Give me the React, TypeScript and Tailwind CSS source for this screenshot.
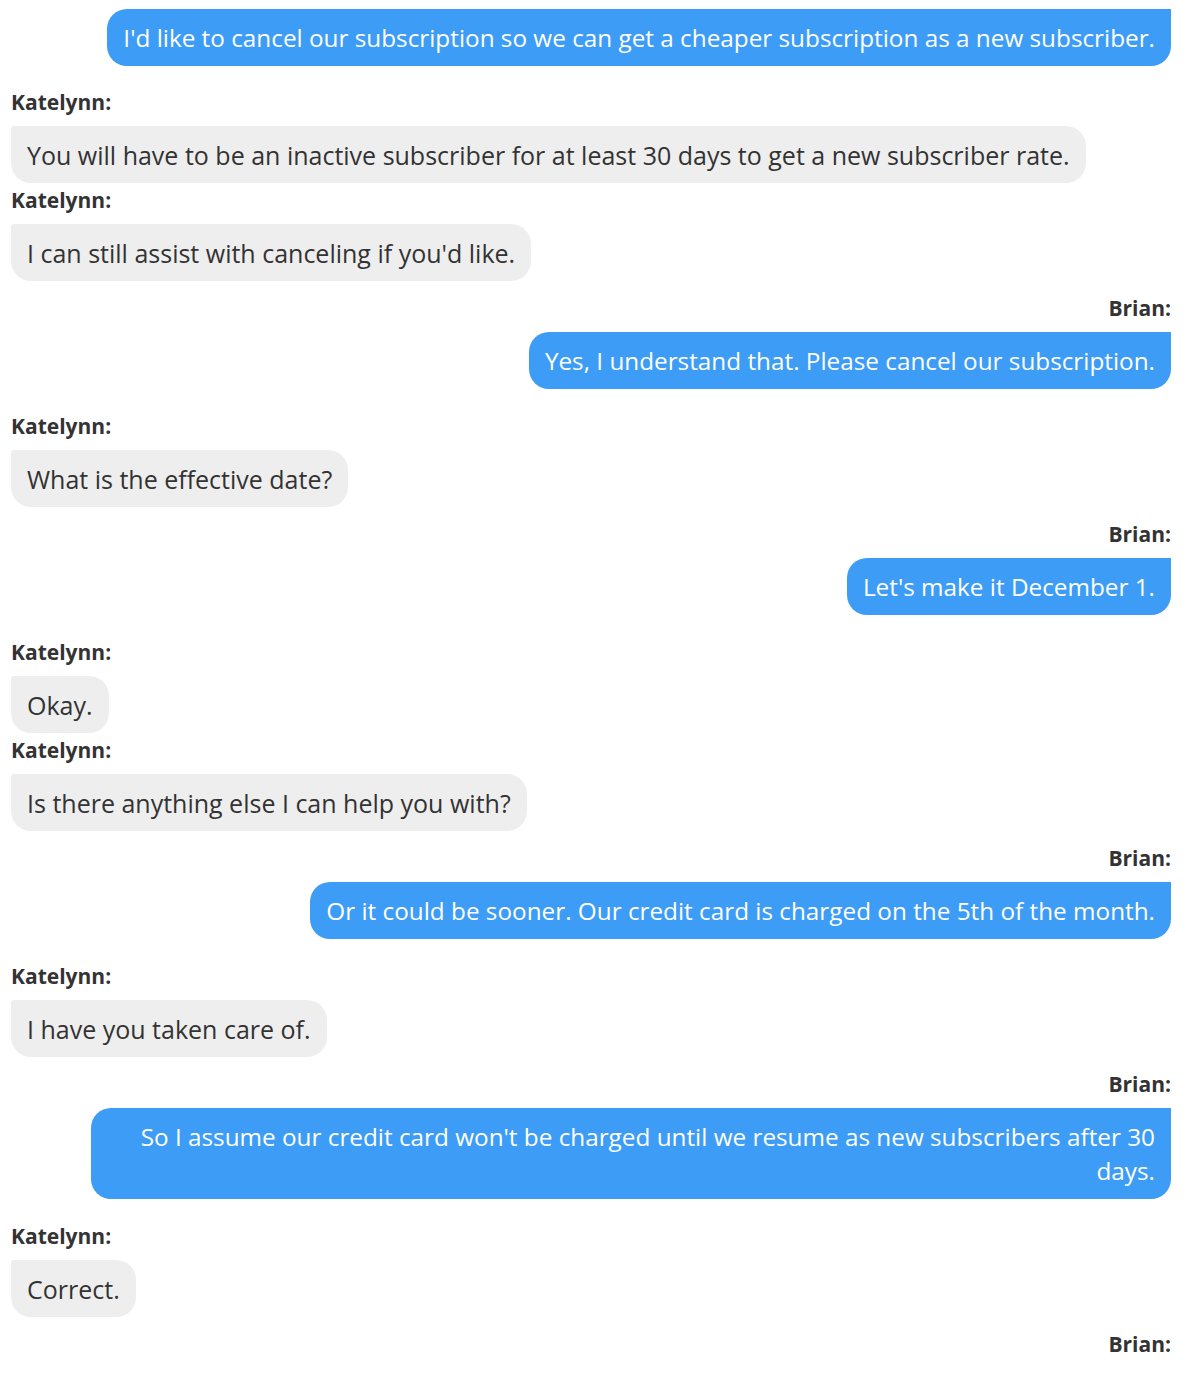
import React from 'react'

type Message = {
  from: 'Katelynn' | 'Brian'
  text: string
  hideName?: boolean
}

// transcript, oldest first (the top one is scrolled so its name is cut off)
const messages: Message[] = [
  { from: 'Brian', text: "I'd like to cancel our subscription so we can get a cheaper subscription as a new subscriber.", hideName: true },
  { from: 'Katelynn', text: 'You will have to be an inactive subscriber for at least 30 days to get a new subscriber rate.' },
  { from: 'Katelynn', text: "I can still assist with canceling if you'd like." },
  { from: 'Brian', text: 'Yes, I understand that. Please cancel our subscription.' },
  { from: 'Katelynn', text: 'What is the effective date?' },
  { from: 'Brian', text: "Let's make it December 1." },
  { from: 'Katelynn', text: 'Okay.' },
  { from: 'Katelynn', text: 'Is there anything else I can help you with?' },
  { from: 'Brian', text: 'Or it could be sooner. Our credit card is charged on the 5th of the month.' },
  { from: 'Katelynn', text: 'I have you taken care of.' },
  { from: 'Brian', text: "So I assume our credit card won't be charged until we resume as new subscribers after 30 days." },
  { from: 'Katelynn', text: 'Correct.' },
]

const ChatBubble = ({ message }: { message: Message }) => {
  const isMe = message.from === 'Brian'

  if (isMe) {
    return (
      <div className={message.hideName ? 'flex flex-col items-end mb-[19px]' : 'flex flex-col items-end mt-[13px] mb-[20px]'}>
        {!message.hideName && (
          <div className='text-[21px] leading-[28px] font-bold text-[#333333] mb-[10px]'>
            {message.from}:
          </div>
        )}
        <div className='max-w-[1080px] bg-[#3d9cf6] text-white text-right text-[24.3px] leading-[34px] px-4 py-[11.5px] rounded-[20px] rounded-tr-none'>
          {message.text}
        </div>
      </div>
    )
  }

  return (
    <div className='flex flex-col items-start mt-[3px]'>
      <div className='text-[21px] leading-[28px] font-bold text-[#333333] mb-[10px]'>
        {message.from}:
      </div>
      <div className='max-w-[1080px] bg-[#eeeeee] text-[#333333] text-[25px] leading-[34px] px-4 py-[11.5px] rounded-[20px] rounded-tl-[3px]'>
        {message.text}
      </div>
    </div>
  )
}

const App = () => {
  return (
    <div
      className='min-h-[1374px] bg-white pl-[11px] pr-[15px] pt-[9px]'
      style={{ fontFamily: '"Open Sans", "Noto Sans", sans-serif' }}
    >
      <div className='flex flex-col'>
        {messages.map((m, i) => (
          <ChatBubble key={i} message={m} />
        ))}
        {/* last name label, bubble is below the fold */}
        <div className='flex justify-end mt-[13px]'>
          <div className='text-[21px] leading-[28px] font-bold text-[#333333]'>
            Brian:
          </div>
        </div>
      </div>
    </div>
  )
}

export default App
